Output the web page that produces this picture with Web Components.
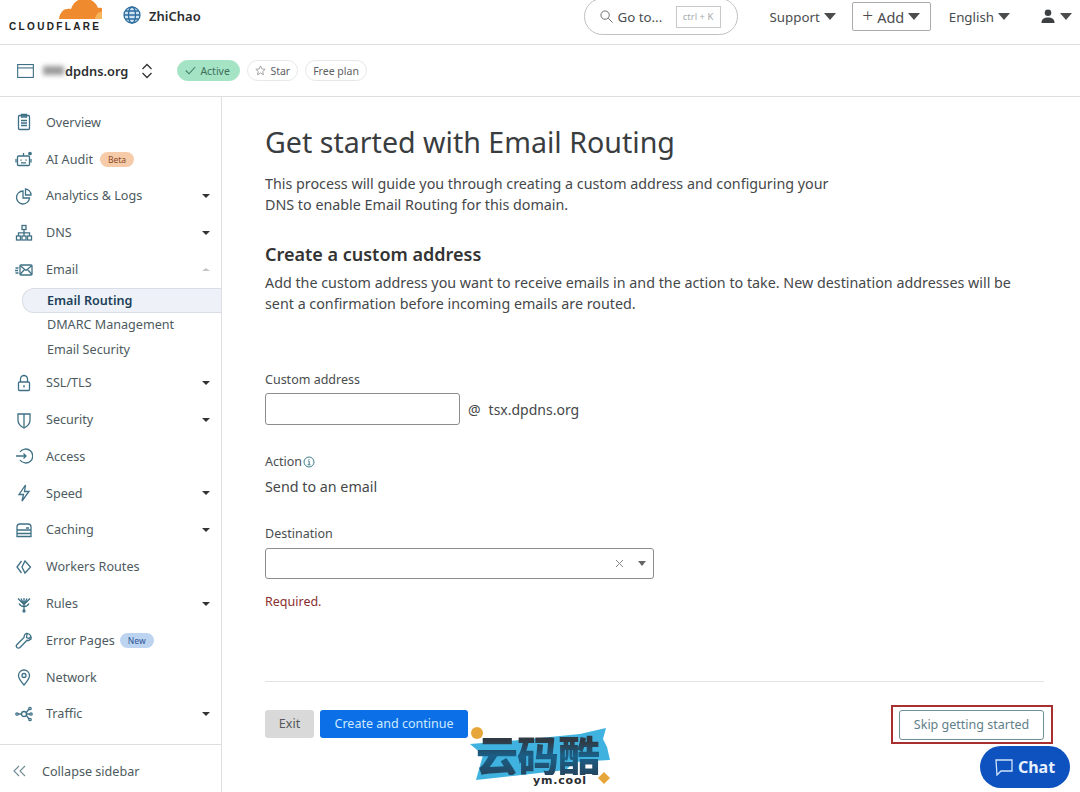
<!DOCTYPE html>
<html lang="en">
<head>
<meta charset="utf-8">
<title>Get started with Email Routing</title>
<style>
  html, body { margin: 0; height: 792px; overflow: hidden; background: #fff; }
  body { font-family: "Noto Sans", "Open Sans", sans-serif; color: #3c3f42; }
  cf-app { display: block; }
</style>
</head>
<body>
<cf-app>
  <cf-topbar></cf-topbar>
  <cf-zonebar></cf-zonebar>
  <cf-layout>
    <cf-sidenav slot="side"></cf-sidenav>
    <cf-wizard slot="main"></cf-wizard>
  </cf-layout>
</cf-app>
<cf-watermark></cf-watermark>
<cf-chat></cf-chat>

<script>
const ICONS = {
  overview: '<rect x="3.500" y="2.500" width="11" height="14" rx="1"/><path d="M6.500 1.500h5v2.500h-5zM6 7.500h6M6 10h6M6 12.500h6"/>',
  audit: '<rect x="2.500" y="6" width="12" height="9.500" rx="1"/><path d="M8.500 6V3M1 9v3.500M16 9v3.500M6 9.500v1.200M11 9.500v1.200M6 12.800h5"/><circle cx="15" cy="3.500" r="1.200" fill="#3f7186"/>',
  analytics: '<path d="M8 4a6.500 6.500 0 1 0 6.500 7H8z"/><path d="M10.500 2a6 6 0 0 1 5.500 6h-5.500z"/>',
  dns: '<rect x="7" y="1.500" width="4" height="4"/><rect x="1.500" y="12" width="4" height="4"/><rect x="7" y="12" width="4" height="4"/><rect x="12.500" y="12" width="4" height="4"/><path d="M9 5.500V12M3.500 12V8.800h11V12"/>',
  email: '<rect x="5" y="4" width="12" height="10" rx="1"/><path d="M5 4.500l6 5 6-5M5 13.500l4.500-5M17 13.500l-4.500-5M.5 7h3M0 9.500h3M.5 12h3"/>',
  lock: '<rect x="3.500" y="8" width="11" height="8.500" rx="1"/><path d="M5.500 8V5a3.500 3.500 0 0 1 7 0v3M9 11v2.500"/>',
  shield: '<path d="M3 3h12v6c0 4-3 6.500-6 8-3-1.500-6-4-6-8z"/><path d="M9 3v14"/>',
  access: '<path d="M5 5a7 7 0 1 1 0 8M1 9h10M8.500 6.500L11 9l-2.500 2.500"/>',
  speed: '<path d="M10.500 1L4 10.500h4.500L7 17l7-9.500H9.500z"/>',
  caching: '<path d="M2 9V6a3 3 0 0 1 3-3h8a3 3 0 0 1 3 3v3M2 9h14v3.500H2zM2 12.500v3h14v-3M11 7h3"/>',
  workers: '<path d="M6.500 3L2 9l4.500 6M10 3l5.500 6-5.500 6-3-6z"/>',
  rules: '<path d="M3 3.500l6 6 6-6M6 3.500l3 6 3-6M9 3v13.500M4 8.500c1 2 3 3 5 3s4-1 5-3"/><circle cx="9" cy="16" r="1"/>',
  wrench: '<path d="M11 2.500a4.500 4.500 0 0 1 5 5.500l-2.500 1.500-1.500-.2L5 16.500a2 2 0 0 1-3-3l7-7a4.500 4.500 0 0 1 2-4zM12 3l-.5 3.500 2.500 1 2-2"/>',
  pin: '<path d="M9 17C5 12.500 3.500 10 3.500 7.500a5.500 5.500 0 0 1 11 0C14.500 10 13 12.500 9 17z"/><circle cx="9" cy="7.500" r="2"/>',
  traffic: '<circle cx="2" cy="9" r="1.200"/><circle cx="9" cy="9" r="2.500"/><path d="M3 9h3.500M11 8l3-4M11 10l3 4M11.500 9h3.500"/><circle cx="15" cy="3.500" r="1.200"/><circle cx="15" cy="14.500" r="1.200"/><circle cx="16" cy="9" r="1.200"/>'
};

class CfTopbar extends HTMLElement {
  constructor() {
    super();
    const shadow = this.attachShadow({ mode: "open" });
    shadow.innerHTML = `
      <style>
        :host { display: flex; height: 44px; align-items: center; border-bottom: 1px solid #dedfe0; padding: 0 8px 0 9px; overflow: hidden; font-size: 13.300px; color: #4a4c4e; }
        .logo { width: 93px; height: 44px; position: relative; overflow: hidden; flex: none; }
        .logo svg { position: absolute; left: 46px; top: -4px; }
        .logo b { position: absolute; left: 0; top: 21px; font: 700 10px/12px "Liberation Sans", sans-serif; letter-spacing: 2.350px; color: #222; white-space: nowrap; }
        .acct { display: flex; align-items: center; gap: 8px; margin-left: 21px; margin-top: -13px; font-weight: 600; font-size: 13px; color: #2c2e30; }
        .acct svg { margin-top: -1px; }
        .right { margin-left: auto; display: flex; align-items: center; margin-top: -11px; }
        .search { width: 154px; height: 37px; box-sizing: border-box; border: 1px solid #bfc1c3; border-radius: 19px; display: flex; align-items: center; padding: 0 16px 0 15px; gap: 5px; margin-right: 32px; }
        kbd { margin-left: auto; border: 1px solid #c6c8ca; font: 9.500px/20px "Noto Sans", sans-serif; color: #a9acae; text-align: center; white-space: nowrap; height: 20px; overflow: hidden; width: 43px; flex: none; }
        .item { display: flex; align-items: center; gap: 4px; }
        .tri { width: 0; height: 0; border: 6px solid transparent; border-top: 7px solid #4a4c4e; border-bottom: 0; }
        .add { border: 1px solid #a9acae; border-radius: 2px; height: 29px; width: 79px; justify-content: center; box-sizing: border-box; margin: 0 18px 0 16px; font-size: 14.500px; }
        .user { margin-left: 30px; gap: 4px; }
      </style>
      <div class="logo">
        <svg width="56" height="24" viewBox="0 0 56 24"><path d="M4 23c1-8 6-11 12-10 3-9 12-13 20-9 4 2 6 5 7 8 6-1 10 4 10 11z" fill="#f08a2e"/><path d="M40 23c1-6 5-9 13-7 1 3 0 5 0 7z" fill="#f6b55a"/></svg>
        <b>CLOUDFLARE</b>
      </div>
      <div class="acct">
        <svg width="18" height="18" viewBox="0 0 18 18" fill="none" stroke="#2d6d9e" stroke-width="1.300"><circle cx="9" cy="9" r="8" fill="#cfe3f1"/><ellipse cx="9" cy="9" rx="3.500" ry="8"/><path d="M1 9h16M2.200 5h13.600M2.200 13h13.600"/></svg>
        <span>ZhiChao</span>
      </div>
      <div class="right">
        <div class="search">
          <svg width="13" height="13" viewBox="0 0 14 14" fill="none" stroke="#666" stroke-width="1"><circle cx="5.500" cy="5.500" r="4.500"/><path d="M9 9l4.500 4.500"/></svg>
          <span>Go to...</span><kbd>ctrl + K</kbd>
        </div>
        <div class="item">Support <span class="tri"></span></div>
        <div class="item add"><span style="font-size:19px;font-weight:300;line-height:1;margin-top:-2px">+</span> Add <span class="tri"></span></div>
        <div class="item">English <span class="tri"></span></div>
        <div class="item user">
          <svg width="16" height="15" viewBox="0 0 17 16" fill="#3d4042"><circle cx="8.500" cy="4" r="3.500"/><path d="M1.500 15c0-4.500 3-6 7-6s7 1.500 7 6z"/></svg>
          <span class="tri"></span>
        </div>
      </div>`;
  }
}

class CfZonebar extends HTMLElement {
  constructor() {
    super();
    const shadow = this.attachShadow({ mode: "open" });
    shadow.innerHTML = `
      <style>
        :host { display: flex; align-items: center; height: 51px; border-bottom: 1px solid #dedfe0; padding: 0 0 0 17px; font-size: 12.800px; }
        .name { margin-left: 9px; display: flex; align-items: center; font-weight: 600; color: #2c2e30; }
        .blur { width: 21px; height: 9px; background: #9a9a9a; filter: blur(2.500px); margin-right: 1px; }
        .updown { margin: 0 24px 0 13px; display: block; }
        .pill { display: flex; align-items: center; gap: 4px; height: 21px; box-sizing: border-box; border-radius: 11px; font-size: 10.500px; padding: 0 7px; margin-right: 7px; color: #5e6163; border: 1px solid #e6e7e8; }
        .active { background: #a4e4c4; border-color: #a4e4c4; color: #3f6f5d; width: 63px; }
      </style>
      <svg width="17" height="14" viewBox="0 0 18 15" fill="none" stroke="#3f7186" stroke-width="1.200"><rect x=".6" y=".6" width="16.800" height="13.800"/><path d="M.6 4.200h16.800"/></svg>
      <div class="name"><span class="blur"></span>dpdns.org</div>
      <svg class="updown" width="12" height="16" viewBox="0 0 12 16" fill="none" stroke="#333" stroke-width="1.300"><path d="M1.500 6L6 1.500 10.500 6M1.500 10L6 14.500 10.500 10"/></svg>
      <div class="pill active"><svg width="11" height="9" viewBox="0 0 11 9" fill="none" stroke="#3f7f66" stroke-width="1.100"><path d="M.8 4.500L4 7.800 10.200 1"/></svg>Active</div>
      <div class="pill"><svg width="11" height="11" viewBox="0 0 12 12" fill="none" stroke="#9a9c9e"><path d="M6 1l1.500 3.300 3.600.4-2.700 2.400.8 3.500L6 8.800l-3.200 1.800.8-3.500L.9 4.700l3.600-.4z"/></svg>Star</div>
      <div class="pill">Free plan</div>`;
  }
}

class CfLayout extends HTMLElement {
  constructor() {
    super();
    const shadow = this.attachShadow({ mode: "open" });
    shadow.innerHTML = `
      <style>
        :host { display: grid; grid-template-columns: 222px 1fr; height: 695px; }
      </style>
      <slot name="side"></slot>
      <slot name="main"></slot>`;
  }
}

class CfNavItem extends HTMLElement {
  constructor() {
    super();
    const shadow = this.attachShadow({ mode: "open" });
    const icon = ICONS[this.getAttribute("icon")] || "";
    const caret = this.getAttribute("caret");
    const badge = this.getAttribute("badge");
    shadow.innerHTML = `
      <style>
        :host { display: flex; align-items: center; height: 36.800px; padding: 0 11px 0 15px; font-size: 12.600px; color: #4d5a60; }
        svg { flex: none; margin-right: 13px; }
        .badge { margin-left: 7px; font-size: 8.500px; line-height: 15px; height: 15px; border-radius: 8px; padding: 0 8px; }
        .beta { background: #f6cba9; color: #8a4a28; }
        .new { background: #bcd4ef; color: #2e5597; margin-left: 5px; }
        .caret { margin-left: auto; width: 0; height: 0; border: 4px solid transparent; border-top: 4px solid #333; border-bottom: 0; }
        .caret.up { border-top: 0; border-bottom: 3px solid #c3c5c6; }
      </style>
      <svg width="18" height="18" viewBox="0 0 18 18" fill="none" stroke="#3f7186" stroke-width="1.300">${icon}</svg>
      <slot></slot>
      ${badge ? `<span class="badge ${badge.toLowerCase()}">${badge}</span>` : ""}
      ${caret ? `<span class="caret ${caret === "up" ? "up" : ""}"></span>` : ""}`;
  }
}

class CfSidenav extends HTMLElement {
  constructor() {
    super();
    const shadow = this.attachShadow({ mode: "open" });
    shadow.innerHTML = `
      <style>
        :host { display: flex; flex-direction: column; height: 695px; box-sizing: border-box; border-right: 1px solid #dedfe0; padding-top: 7px; }
        .sub { display: flex; flex-direction: column; margin-bottom: 2px; }
        .sub div { height: 24.800px; line-height: 24.800px; font-size: 12.600px; color: #4d5a60; padding-left: 47px; }
        .sub .on { margin-left: 22px; padding-left: 24px; font-weight: 600; color: #1c3f5a; background: #eef2f8; border: 1px solid #d9dee6; border-right: 0; border-radius: 12px 0 0 12px; box-sizing: border-box; line-height: 23px; }
        .foot { margin-top: auto; border-top: 1px solid #dedfe0; box-sizing: border-box; height: 48px; display: flex; align-items: center; padding: 5px 0 0 13px; font-size: 12.600px; color: #4d5a60; gap: 16px; }
      </style>
      <cf-nav-item icon="overview">Overview</cf-nav-item>
      <cf-nav-item icon="audit" badge="Beta">AI Audit</cf-nav-item>
      <cf-nav-item icon="analytics" caret="down">Analytics &amp; Logs</cf-nav-item>
      <cf-nav-item icon="dns" caret="down">DNS</cf-nav-item>
      <cf-nav-item icon="email" caret="up">Email</cf-nav-item>
      <div class="sub">
        <div class="on">Email Routing</div>
        <div>DMARC Management</div>
        <div>Email Security</div>
      </div>
      <cf-nav-item icon="lock" caret="down">SSL/TLS</cf-nav-item>
      <cf-nav-item icon="shield" caret="down">Security</cf-nav-item>
      <cf-nav-item icon="access">Access</cf-nav-item>
      <cf-nav-item icon="speed" caret="down">Speed</cf-nav-item>
      <cf-nav-item icon="caching" caret="down">Caching</cf-nav-item>
      <cf-nav-item icon="workers">Workers Routes</cf-nav-item>
      <cf-nav-item icon="rules" caret="down">Rules</cf-nav-item>
      <cf-nav-item icon="wrench" badge="New">Error Pages</cf-nav-item>
      <cf-nav-item icon="pin">Network</cf-nav-item>
      <cf-nav-item icon="traffic" caret="down">Traffic</cf-nav-item>
      <div class="foot">
        <svg width="13" height="12" viewBox="0 0 13 12" fill="none" stroke="#6f8a96" stroke-width="1.100"><path d="M6 1L1 6l5 5M12 1L7 6l5 5"/></svg>
        <span>Collapse sidebar</span>
      </div>`;
  }
}

class CfWizard extends HTMLElement {
  constructor() {
    super();
    const shadow = this.attachShadow({ mode: "open" });
    shadow.innerHTML = `
      <style>
        :host { display: block; padding: 24px 36px 0 43px; font-size: 14.300px; color: #45484a; }
        h1 { margin: 0; font-size: 28.600px; font-weight: 400; line-height: 42px; color: #3a3d3f; }
        .lead { margin: 10px 0 0; line-height: 21px; width: 575px; }
        h2 { margin: 27px 0 0; font-size: 18px; line-height: 24px; font-weight: 600; color: #333; }
        .desc { margin: 6px 0 0; line-height: 21px; width: 760px; }
        label { display: block; font-size: 12.500px; line-height: 18px; color: #4a4d4f; }
        .f1 { margin-top: 57px; }
        .row { display: flex; align-items: center; margin-top: 4px; font-size: 14px; }
        .input { width: 195px; height: 32px; box-sizing: border-box; border: 1px solid #8b8e90; border-radius: 3px; }
        .at { margin-left: 8px; }
        .dom { margin-left: 8px; }
        .f2 { margin-top: 28px; display: flex; align-items: center; gap: 1px; }
        .val { margin-top: 6px; line-height: 20px; }
        .f3 { margin-top: 28px; }
        .select { margin-top: 5px; width: 389px; height: 31px; box-sizing: border-box; border: 1px solid #8b8e90; border-radius: 3px; display: flex; align-items: center; justify-content: flex-end; padding-right: 7px; gap: 14px; }
        .select i { width: 0; height: 0; border: 4px solid transparent; border-top: 5px solid #666; border-bottom: 0; }
        .err { margin-top: 14px; font-size: 12.500px; line-height: 18px; color: #8a2f2f; }
        .foot { margin-top: 70px; border-top: 1px solid #e2e3e4; padding-top: 28px; display: flex; align-items: flex-start; gap: 6px; }
        button { font: inherit; font-size: 12.500px; border-radius: 3px; height: 28px; padding: 0 0 2px; border: 0; }
        .exit { width: 49px; background: #d9d9d9; color: #55585a; }
        .go { width: 148px; background: #0b6fe8; color: #cdeaff; }
        .skipbox { margin: -5px -9px 0 auto; border: 2px solid #a82f2f; padding: 3px 7px 2px 6px; }
        .skip { display: block; width: 145px; height: 30px; background: #fff; border: 1px solid #6f8f96; color: #5f8089; }
      </style>
      <h1>Get started with Email Routing</h1>
      <p class="lead">This process will guide you through creating a custom address and configuring your DNS to enable Email Routing for this domain.</p>
      <h2>Create a custom address</h2>
      <p class="desc">Add the custom address you want to receive emails in and the action to take. New destination addresses will be sent a confirmation before incoming emails are routed.</p>
      <label class="f1">Custom address</label>
      <div class="row"><div class="input"></div><span class="at">@</span><span class="dom">tsx.dpdns.org</span></div>
      <label class="f2">Action<svg width="12" height="12" viewBox="0 0 12 12" fill="none" stroke="#3f7f8a"><circle cx="6" cy="6" r="5"/><path d="M5 5h1.200v3.500M4.500 8.800h3M6 3v.8"/></svg></label>
      <div class="val">Send to an email</div>
      <label class="f3">Destination</label>
      <div class="select">
        <svg width="9" height="9" viewBox="0 0 9 9" stroke="#888" fill="none"><path d="M1 1l7 7M8 1L1 8"/></svg>
        <i></i>
      </div>
      <div class="err">Required.</div>
      <div class="foot">
        <button class="exit">Exit</button>
        <button class="go">Create and continue</button>
        <div class="skipbox"><button class="skip">Skip getting started</button></div>
      </div>`;
  }
}

// watermark floats over the page, not part of the layout
class CfWatermark extends HTMLElement {
  constructor() {
    super();
    const shadow = this.attachShadow({ mode: "open" });
    shadow.innerHTML = `
      <style>
        :host { position: absolute; left: 470px; top: 725px; width: 142px; height: 62px; display: block; }
        svg { position: absolute; inset: 0; overflow: visible; }
        .cn { position: absolute; left: 6px; top: 8px; font: 900 42px/42px "Noto Sans CJK SC", sans-serif; letter-spacing: -1px; white-space: nowrap; background: linear-gradient(#2f3a45 20%, #1a5f88 55%, #24465f); -webkit-background-clip: text; background-clip: text; color: transparent; }
        .en { position: absolute; left: 63px; top: 50px; font: 700 11px/12px "DejaVu Sans", sans-serif; letter-spacing: .8px; color: #2a2d30; }
      </style>
      <svg width="142" height="62" viewBox="0 0 142 62">
        <circle cx="7" cy="8" r="6" fill="#e6a63a"/>
        <path d="M0 19l50-4 60-6 26-6-3 11 4 8 3 13-36 2-8 8-90 10 7-25z" fill="#3fb2e0"/>
        <path d="M134 47l6 6-6 6-6-6z" fill="#e6a63a"/>
      </svg>
      <span class="cn">云码酷</span>
      <span class="en">ym.cool</span>`;
  }
}

class CfChat extends HTMLElement {
  constructor() {
    super();
    const shadow = this.attachShadow({ mode: "open" });
    shadow.innerHTML = `
      <style>
        :host { position: absolute; left: 980px; top: 746px; width: 90px; height: 42px; border-radius: 21px; background: #0d52bf; color: #e8f1ff; display: flex; align-items: center; justify-content: center; gap: 5px; font-weight: 700; font-size: 16px; }
      </style>
      <svg width="18" height="17" viewBox="0 0 18 17" fill="none" stroke="#cfe3fa" stroke-width="1.300"><path d="M1 1h16v11H6l-4 4z"/></svg>
      <span>Chat</span>`;
  }
}

class CfApp extends HTMLElement {
  constructor() {
    super();
    const shadow = this.attachShadow({ mode: "open" });
    shadow.innerHTML = `<style>:host { display: block; }</style><slot></slot>`;
  }
}

customElements.define("cf-nav-item", CfNavItem);
customElements.define("cf-topbar", CfTopbar);
customElements.define("cf-zonebar", CfZonebar);
customElements.define("cf-layout", CfLayout);
customElements.define("cf-sidenav", CfSidenav);
customElements.define("cf-wizard", CfWizard);
customElements.define("cf-watermark", CfWatermark);
customElements.define("cf-chat", CfChat);
customElements.define("cf-app", CfApp);
</script>
</body>
</html>
